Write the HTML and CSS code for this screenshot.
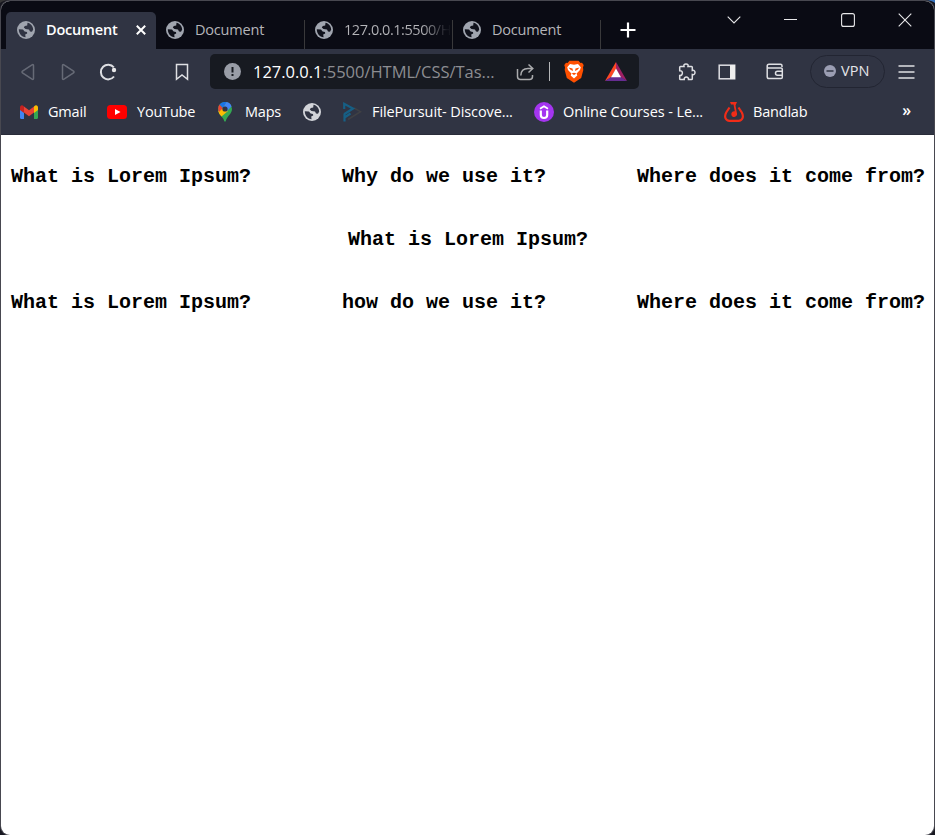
FILE: index.html
```html
<!DOCTYPE html>
<html lang="en">
<head>
<meta charset="utf-8">
<title>Document</title>
<link rel="stylesheet" href="styles.css">
</head>
<body>
<svg width="0" height="0" class="defs">
  <symbol id="globe" viewBox="0 0 18 18">
    <circle cx="9" cy="9" r="9" fill="currentColor"/>
    <path class="sea" d="M10.500 1.800C13.500 2.400 16 5 16.200 8.500L15 10.700 13 10.500 12 8.500 8.500 8 6.800 6.600 7.800 5 10.200 4.600ZM1.800 8.300 6 8.500 7.600 10.600 10 11 10.200 12.600 8.200 13.500 8.600 16.200C4.500 16 1.800 12.500 1.800 8.300Z"/>
  </symbol>
</svg>
<div class="window">
  <header class="titlebar">
    <div class="tab active"><svg class="globe"><use href="#globe"/></svg><span class="label">Document</span><svg class="close" viewBox="0 0 10 10"><path d="M.8.8 9.200 9.200M9.200.8.8 9.200"/></svg></div>
    <div class="tab"><svg class="globe"><use href="#globe"/></svg><span class="label">Document</span></div>
    <div class="tab narrow"><svg class="globe"><use href="#globe"/></svg><span class="label fade">127.0.0.1:5500/H</span></div>
    <div class="tab narrow last"><svg class="globe"><use href="#globe"/></svg><span class="label">Document</span></div>
    <svg class="plus" viewBox="0 0 16 16"><path d="M8 .5V15.500M.5 8H15.500"/></svg>
    <div class="controls">
      <svg width="14" height="8"><path d="M.7.7 7 7 13.300.7"/></svg>
      <svg width="14" height="2"><path d="M0 .5H13"/></svg>
      <svg width="14" height="14"><rect x=".6" y=".6" width="12.800" height="12.800" rx="2"/></svg>
      <svg width="14" height="14"><path d="M.7.7 13.300 13.300M13.300.7.7 13.300"/></svg>
    </div>
  </header>

  <nav class="toolbar">
    <svg class="dim back" width="14" height="18"><path d="M12.500 2.500V15.500Q12.500 17 11 16.200L1.500 10Q.5 9 1.500 8L11 1.800Q12.500 1 12.500 2.500Z"/></svg>
    <svg class="dim forward" width="14" height="18"><path d="M1.500 2.500V15.500Q1.500 17 3 16.200L12.500 10Q13.500 9 12.500 8L3 1.800Q1.500 1 1.500 2.500Z"/></svg>
    <svg class="reload" width="18" height="18"><path d="M15 13.500A7.300 7.300 0 1 1 14.800 4.400"/><circle cx="15" cy="7" r="2.200"/></svg>
    <svg class="mark" width="14" height="18"><path d="M1.500 1.500H12.500V16.300L7 12 1.500 16.300Z"/></svg>
    <div class="address">
      <svg class="info" width="17" height="17"><circle cx="8.500" cy="8.500" r="8.500"/><path d="M8.500 4V9.500M8.500 11V13"/></svg>
      <span class="url"><b>127.0.0.1</b>:5500/HTML/CSS/Tas...</span>
      <svg class="share" width="19" height="18"><path d="M1.500 6V13.500Q1.500 16.500 4.500 16.500H13.500Q16.500 16.500 16.500 13.500V12M4.800 12.500Q5 5.500 12 5.500H16.500M12.500 1.500 16.800 5.500 12.500 9.500"/></svg>
      <i class="rule"></i>
      <svg class="lion" width="20" height="23" viewBox="0 0 20 23"><path fill="#ff5000" d="M5.500.8H14.500L16.500 3 18 2.800 19.700 5 19 7.500 19.300 10 17.200 18 10 22.800 2.800 18 .7 10 1 7.500.3 5 2 2.800 3.500 3Z"/><path fill="#fff" d="M6 4 10 4.700 14 4 16.800 7.200 16 10 12.600 13.500 13.300 15.500 10 18.500 6.700 15.500 7.400 13.500 4 10 3.200 7.200Z"/><path fill="#ff5000" d="M4.500 7.500 8.500 8.500 9 11 6.500 9.700ZM15.500 7.500 11.500 8.500 11 11 13.500 9.700ZM7.500 13.500 10 12.700 12.500 13.500 10 15Z"/></svg>
      <svg class="bat" width="22" height="19" viewBox="0 0 22 19"><path fill="#ff4724" d="M11 0V7L6 15.500 0 19Z"/><path fill="#9e1f63" d="M11 0 22 19 16 15.500 11 7Z"/><path fill="#662d91" d="M0 19 6 15H16L22 19Z"/><path fill="#fff" d="M11 6.500 16 15.300H6Z"/></svg>
    </div>
    <svg class="puzzle" width="18" height="18"><path d="M1.700 4.200Q1.700 3.400 2.500 3.400H6C5.500 1.800 6.500 1 8 1S10.500 1.800 10 3.400H13.500Q14.300 3.400 14.300 4.200V7.500C16 7 17 8.100 17 9.500S16 12 14.300 11.500V15.700Q14.300 16.500 13.500 16.500H10.500C10.700 15 9.700 14 8.300 14S6 15 6.200 16.500H2.500Q1.700 16.500 1.700 15.700V12.500C3.500 12.700 4.400 11.500 4.400 10S3.500 7.500 1.700 7.700Z"/></svg>
    <svg class="panel" width="18" height="16"><rect x="1.200" y="1.200" width="15.500" height="13.600"/><path class="solid" d="M12 1H17V15H12Z"/></svg>
    <svg class="wallet" width="18" height="17"><path d="M16 4V2.800Q16 1.300 14.500 1.300H3Q1.200 1.300 1.200 3.200T3 5H15Q16.300 5 16.300 6.300V14.300Q16.300 15.600 15 15.600H3Q1.200 15.600 1.200 13.800V3.200M17 8.200H11.500Q9.500 8.200 9.500 10.200T11.500 12.200H17"/></svg>
    <div class="vpn"><svg width="12" height="12"><circle cx="6" cy="6" r="6"/><path d="M2.500 6H9.500"/></svg><span>VPN</span></div>
    <svg class="menu" width="17" height="14"><path d="M.5 1H16.500M.5 7H16.500M.5 13H16.500"/></svg>
  </nav>

  <nav class="bookmarks">
    <a class="gmail"><svg width="18" height="14" viewBox="0 0 18 14"><path fill="#4285f4" d="M0 3H4V14H1.500Q0 14 0 12.500Z"/><path fill="#34a853" d="M14 3H18V12.500Q18 14 16.500 14H14Z"/><path fill="#fbbc04" d="M14 1.500Q16-.5 17.500 1 18 1.500 18 2.500V5L14 8Z"/><path fill="#c5221f" d="M4 1.500Q2-.5.5 1 0 1.500 0 2.500V5L4 8Z"/><path fill="#ea4335" d="M4 1.500 9 5.300 14 1.500V7.500L9 11.200 4 7.500Z"/></svg><span>Gmail</span></a>
    <a class="youtube"><svg width="20" height="14"><rect width="20" height="14" rx="3.500" fill="#f00"/><path fill="#fff" d="M8 4 13.500 7 8 10Z"/></svg><span>YouTube</span></a>
    <a class="maps"><svg width="14" height="20" viewBox="0 0 14 20"><path fill="#34a853" d="M0 7A7 7 0 0 1 14 7C14 12 9 14 7.800 19Q7 20.500 6.200 19C5.500 15 0 13 0 7Z"/><path fill="#fbbc04" d="M.2 9 4 6 10 9 3.500 14.500Q.8 11.800.2 9Z"/><path fill="#ea4335" d="M1.500 2.600 5 6 1 10Q-.8 5.600 1.500 2.600Z"/><path fill="#1a73e8" d="M1.500 2.600Q4.200-.7 8.500.1L5 6Z"/><path fill="#4285f4" d="M8.500.1Q12.500 1 13.500 4.500L8.500 9.500 5 6Z"/><circle cx="7" cy="7" r="2.600" fill="#303443"/></svg><span>Maps</span></a>
    <a class="site"><svg class="globe"><use href="#globe"/></svg></a>
    <a class="pursuit"><svg width="20" height="20"><path fill="none" stroke="#3f4044" stroke-width="1.500" d="M12 6 18.500 9.700 6 17.500"/><path fill="none" stroke="#165f85" stroke-width="2.200" d="M2.200 7V1.800L11 6.500 2.500 12M2.500 19.500V11.500M2.500 15.500 8.500 11.500"/></svg><span>FilePursuit- Discove...</span></a>
    <a class="courses"><svg width="20" height="20"><circle cx="10" cy="10" r="10" fill="#a435f0"/><path fill="none" stroke="#fff" stroke-width="2.200" d="M6.800 8.500V13Q6.800 16 10 16T13.200 13V8.500"/><path fill="none" stroke="#fff" stroke-width="1.800" d="M6 6.700 10 4.200 14 6.700"/></svg><span>Online Courses - Le...</span></a>
    <a class="bandlab"><svg width="20" height="20"><path fill="none" stroke="#f12c18" stroke-width="2.200" d="M5.500 5.500 2.200 10.500C-.2 15 1.800 18.800 5.500 18.800H14.500C18.200 18.800 20.200 15 17.800 10.500L14.500 5.500"/><path fill="#f12c18" d="M6 0H13L11.500 3.500 13 11.500A2.900 2.900 0 1 1 10.800 9.300L9.500 2.500H7Z"/></svg><span>Bandlab</span></a>
    <span class="more">»</span>
  </nav>

  <main>
    <div class="row"><h2>What is Lorem Ipsum?</h2><h2>Why do we use it?</h2><h2>Where does it come from?</h2></div>
    <div class="row center"><h2>What is Lorem Ipsum?</h2></div>
    <div class="row"><h2>What is Lorem Ipsum?</h2><h2>how do we use it?</h2><h2>Where does it come from?</h2></div>
  </main>
</div>
</body>
</html>
```
FILE: styles.css
```css
* { box-sizing: border-box; }
body {
  margin: 0;
  height: 835px;
  padding: 1px 1px 0;
  overflow: hidden;
  background: linear-gradient(90deg, #353536 0 130px, #8a9195 131px, #8d84a8 600px, #3775c0 930px);
  font-family: "Open Sans", "Noto Sans", sans-serif;
  font-size: 14.5px;
  color: #fff;
}
.defs { display: block; position: absolute; }
svg { flex: none; display: block; fill: none; stroke: none; }
.window { height: 834px; background: #fff; border-radius: 9px; overflow: hidden; box-shadow: 0 0 0 1px #484850, 0 8px 0 9px #171720; }
.titlebar { height: 48px; background: #0a0b14; display: flex; align-items: flex-end; padding-left: 5px; }
.tab { width: 149px; height: 29px; display: flex; align-items: center; padding: 0 0 10px 10px; border-right: 1px solid #39393b; color: #b5b5b9; }
.tab.active { width: 150px; height: 37px; padding: 0 10px 1px 11px; background: #303443; border: 0; border-radius: 5px 5px 0 0; color: #fff; font-weight: 600; }
.tab.narrow { width: 148px; }
.globe { width: 18px; height: 18px; color: #a0a5af; }
.tab .label { width: 72px; margin-left: 11px; padding-bottom: 1px; white-space: nowrap; letter-spacing: -.2px; }
.tab .label.fade { width: 108px; background: linear-gradient(90deg, #b5b5b9 78px, #b5b5b910 103px); background-clip: text; -webkit-background-clip: text; color: transparent; letter-spacing: -.45px; }
.active .globe { --sea: #303443; }
.sea { fill: var(--sea, #10121c); }
.close { width: 10px; height: 10px; margin-left: auto; stroke: #fff; stroke-width: 2; }
.plus { width: 16px; height: 16px; margin: 0 0 11px 19px; stroke: #fff; stroke-width: 2.200; }
.controls { margin-left: auto; margin-right: 22px; height: 48px; padding-bottom: 10px; display: flex; align-items: center; gap: 43px; }
.controls svg { stroke: #e8e8ea; stroke-width: 1.100; }
.toolbar { height: 45px; background: #303443; display: flex; align-items: center; padding-left: 20px; }
.toolbar > svg { stroke: #dedfe3; stroke-width: 1.500; }
.toolbar > .dim { stroke: #666a76; }
.forward { margin-left: 26px; }
.toolbar > .reload { margin-left: 24px; stroke-width: 2; }
.reload circle { fill: #e7e7e9; stroke: none; }
.mark { margin-left: 58px; }
.address { width: 429px; height: 35px; margin-left: 21px; padding-left: 14px; background: #171a21; border-radius: 5px; display: flex; align-items: center; }
.info circle { fill: #999da7; }
.info path { stroke: #171a21; stroke-width: 2; }
.url { width: 247px; margin-left: 12px; font-size: 16.500px; letter-spacing: -.02px; color: #8c8d91; white-space: nowrap; }
.url b { font-weight: 400; color: #fff; }
.share { margin-left: 16px; stroke: #aaabad; stroke-width: 1.500; }
.rule { width: 1px; height: 19px; margin-left: 14px; background: #b5b6b8; }
.lion { margin-left: 14px; }
.bat { margin-left: 21px; }
.puzzle { margin-left: 39px; }
.panel { margin-left: 22px; }
.solid { fill: #eee; stroke: none; }
.wallet { margin-left: 30px; }
.vpn { width: 75px; height: 33px; margin-left: 26px; display: flex; align-items: center; gap: 5px; padding: 0 0 2px 13px; border: 1px solid #222532; border-radius: 17px; color: #e5e5e9; font-size: 14.500px; letter-spacing: .1px; }
.vpn circle { fill: #9b9eb3; }
.vpn path { stroke: #303443; stroke-width: 1.500; }
.menu { margin-left: 13px; }
.bookmarks { height: 41px; background: #303443; border-bottom: 1px solid #292c39; display: flex; align-items: center; padding: 0 0 5px 19px; letter-spacing: -.2px; }
.bookmarks a { flex: none; display: flex; align-items: center; white-space: nowrap; }
.bookmarks a span { margin-left: 10px; }
.bookmarks .globe { color: #d2d4d9; --sea: #303443; }
.gmail { width: 87px; }
.youtube { width: 111px; }
.maps { width: 85px; }
.bookmarks .maps span { margin-left: 13px; }
.site { width: 39px; }
.pursuit { width: 192px; letter-spacing: -.1px; }
.courses { width: 190px; letter-spacing: -.1px; }
.bookmarks .courses span, .bookmarks .bandlab span { margin-left: 9px; }
.more { margin-left: auto; margin-right: 23px; padding-bottom: 3px; font-size: 16px; font-weight: 600; }
main { display: flex; flex-direction: column; gap: 40px; padding: 30px 9px 0 10px; color: #000; }
.row { display: flex; justify-content: space-between; }
.row.center { justify-content: center; }
h2 { margin: 0; font: 700 20px/23px "Liberation Mono", monospace; white-space: nowrap; }
```
